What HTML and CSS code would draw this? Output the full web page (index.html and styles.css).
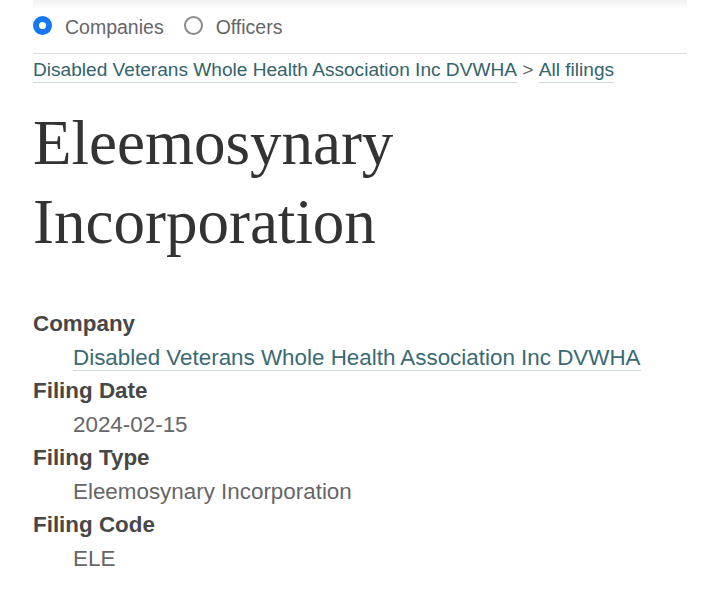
FILE: index.html
```html
<!DOCTYPE html>
<html lang="en">
<head>
    <meta charset="UTF-8">
    <meta name="viewport" content="width=device-width, initial-scale=1.0">
    <title>Eleemosynary Incorporation - Filing</title>
    <link rel="stylesheet" href="styles.css">
</head>
<body>
    <div class="page">
        <form class="search-type">
            <label class="radio-option">
                <span class="radio checked"></span>
                <span class="radio-label">Companies</span>
            </label>
            <label class="radio-option">
                <span class="radio"></span>
                <span class="radio-label">Officers</span>
            </label>
        </form>

        <nav class="breadcrumb">
            <a href="#">Disabled Veterans Whole Health Association Inc DVWHA</a>
            <span class="sep">&gt;</span>
            <a href="#">All filings</a>
        </nav>

        <h1 class="filing-title">Eleemosynary Incorporation</h1>

        <dl class="filing-details">
            <dt>Company</dt>
            <dd><a href="#">Disabled Veterans Whole Health Association Inc DVWHA</a></dd>
            <dt>Filing Date</dt>
            <dd>2024-02-15</dd>
            <dt>Filing Type</dt>
            <dd>Eleemosynary Incorporation</dd>
            <dt>Filing Code</dt>
            <dd>ELE</dd>
        </dl>
    </div>
</body>
</html>
```

FILE: styles.css
```css
* {
    margin: 0;
    padding: 0;
    box-sizing: border-box;
}

body {
    background-color: #fff;
    font-family: "Liberation Sans", Arial, sans-serif;
    color: #444;
}

.page {
    max-width: 654px;
    margin: 0 auto;
}

.search-type {
    display: flex;
    align-items: center;
    gap: 20px;
    height: 54px;
    padding-bottom: 3px;
    border-bottom: 1px solid #dcdcdc;
    background: linear-gradient(#f1f1f4, #fff 9px);
}

.radio-option {
    display: flex;
    align-items: center;
    gap: 13px;
}

.radio {
    flex-shrink: 0;
    width: 19px;
    height: 19px;
    border-radius: 50%;
    border: 2px solid #8a8a8a;
    background-color: #fff;
}

.radio.checked {
    border: 6px solid #1677f0;
}

.radio-label {
    font-size: 19.5px;
    line-height: 24px;
    color: #666;
    padding-top: 4px;
}

.breadcrumb {
    margin-top: 4px;
    font-size: 19.1px;
    line-height: 24px;
    color: #666;
}

.breadcrumb a {
    display: inline-block;
    color: #33636c;
    text-decoration: none;
    border-bottom: 1px solid #cddcdf;
}

.filing-title {
    margin-top: 21px;
    font-family: "Liberation Serif", "Times New Roman", serif;
    font-size: 63px;
    line-height: 79px;
    font-weight: normal;
    color: #333;
}

.filing-details {
    margin-top: 45px;
    font-size: 22.4px;
    line-height: 33.5px;
}

.filing-details dt {
    font-weight: bold;
    color: #474747;
}

.filing-details dd {
    margin-left: 40px;
    color: #666;
}

.filing-details dd a {
    color: #3a6a73;
    text-decoration: none;
    border-bottom: 1px solid #cddcdf;
}
```
